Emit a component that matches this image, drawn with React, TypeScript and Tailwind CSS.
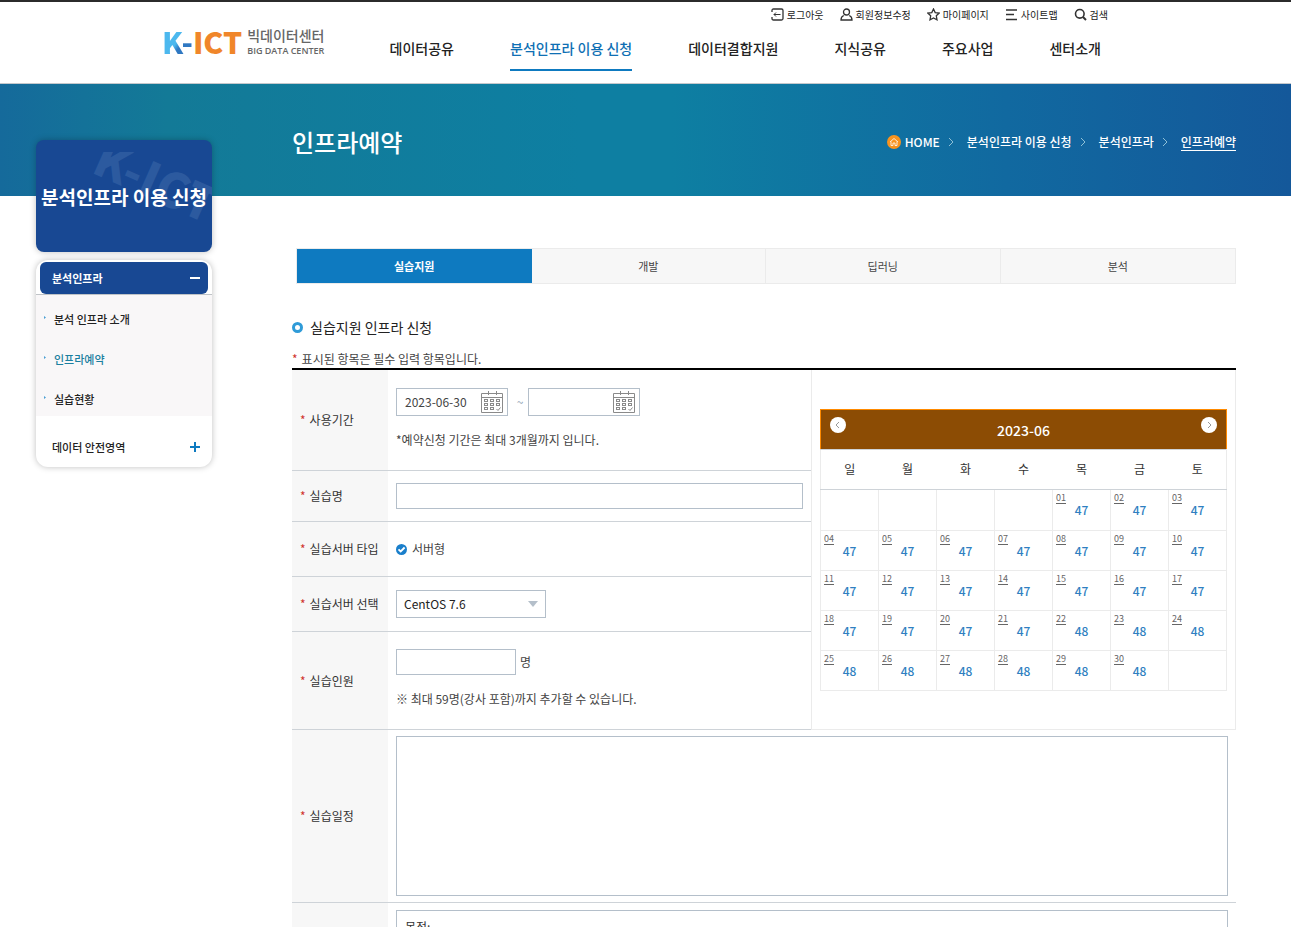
import { useState } from "react";

const UTIL_LINKS = [
  { label: "로그아웃", icon: "logout" },
  { label: "회원정보수정", icon: "user" },
  { label: "마이페이지", icon: "star" },
  { label: "사이트맵", icon: "menu" },
  { label: "검색", icon: "search" },
];

const NAV = ["데이터공유", "분석인프라 이용 신청", "데이터결합지원", "지식공유", "주요사업", "센터소개"];
const SIDE_ITEMS = ["분석 인프라 소개", "인프라예약", "실습현황"];
const TABS = ["실습지원", "개발", "딥러닝", "분석"];
const WEEKDAYS = ["일", "월", "화", "수", "목", "금", "토"];

// 2023-06 starts on Thursday
const FIRST_WEEKDAY = 4;
const DAYS_IN_MONTH = 30;

const WEEKS = Array.from({ length: 5 }, (_, w) =>
  Array.from({ length: 7 }, (_, d) => {
    const day = w * 7 + d - FIRST_WEEKDAY + 1;
    if (day < 1 || day > DAYS_IN_MONTH) return null;
    return { day: String(day).padStart(2, "0"), count: day < 22 ? 47 : 48 };
  })
);

function UtilIcon({ name }: { name: string }) {
  const paths: Record<string, React.ReactNode> = {
    logout: (
      <>
        <path d="M1 4V2.500Q1 1 2.500 1h8Q12 1 12 2.500v8q0 1.500-1.500 1.500h-8Q1 12 1 10.500V9" />
        <path d="M9.500 6.500H3M5 4.500l-2 2 2 2" strokeWidth="1" />
      </>
    ),
    user: (
      <>
        <circle cx="6.500" cy="4" r="3" />
        <path d="M3.800 7.500Q1 8.500 1 12h11q0-3.500-2.800-4.500" />
      </>
    ),
    star: <path d="M6.500 1l1.700 3.600 4 .5-2.900 2.700.7 4-3.500-1.900L3 11.800l.7-4L.8 5.100l4-.5z" />,
    menu: <path d="M1 2h11M1 6.500h8M1 11.500h11" strokeWidth="1.600" />,
    search: (
      <>
        <circle cx="5.800" cy="5.800" r="4.300" strokeWidth="1.600" />
        <path d="M9 9l3 3" strokeWidth="2" />
      </>
    ),
  };
  return (
    <svg viewBox="0 0 13 13" className="size-[13px] shrink-0" fill="none" stroke="#333" strokeWidth="1.300">
      {paths[name]}
    </svg>
  );
}

function CalendarIcon() {
  return (
    <svg viewBox="0 0 22 22" className="h-[22px] w-[22px]" fill="none" stroke="#8a8a8a">
      <path d="M.5 2.500h21v19H.5zM.5 6.500h21" />
      <path d="M7.500 0v4M15.500 0v4" />
      {[8.5, 12.5, 16.5].map((y) =>
        [3.5, 9.5, 15.5].map((x) =>
          x > 15 && y > 16 ? (
            <path key={`${x}-${y}`} d="M15.500 18l1.500 1.500 2.500-3" />
          ) : (
            <rect key={`${x}-${y}`} x={x} y={y} width="3" height="2" />
          )
        )
      )}
    </svg>
  );
}

function Logo() {
  return (
    <a href="#" aria-label="K-ICT 빅데이터센터" className="-ml-0.5 flex items-center gap-[5px]">
      <span className="text-[30px] leading-8 font-black whitespace-nowrap">
        <span className="bg-linear-to-br from-[#4cb8ee] from-50% to-[#2f78c2] to-60% bg-clip-text text-transparent">K-</span>
        <span className="text-[#f0862a]">ICT</span>
      </span>
      <span className="flex flex-col whitespace-nowrap text-[#666]">
        <span className="text-[14px] leading-5 font-medium">빅데이터센터</span>
        <span className="font-['Open_Sans',sans-serif] text-[9px] leading-3 font-semibold">BIG DATA CENTER</span>
      </span>
    </a>
  );
}

function Header() {
  return (
    <header className="h-21 border-t-2 border-b border-t-[#2b2b2b] border-b-[#c4c8cc] bg-white pr-[19px]">
      <div className="mx-auto flex max-w-[944px] items-start justify-between">
        <div className="mt-[23px]">
          <Logo />
        </div>
        <div className="flex flex-col items-end">
          <ul className="flex h-6 items-center gap-4">
            {UTIL_LINKS.map((u) => (
              <li key={u.label}>
                <a href="#" className="flex items-center gap-[3px] text-[10px] whitespace-nowrap text-[#222]">
                  <UtilIcon name={u.icon} />
                  {u.label}
                </a>
              </li>
            ))}
          </ul>
          <nav className="mt-2.5 mr-[7px]">
            <ul className="flex gap-14">
              {NAV.map((label, i) => (
                <li key={label}>
                  <a
                    href="#"
                    className={`block h-[35px] text-[14px] leading-6 font-medium whitespace-nowrap ${
                      i === 1 ? "border-b-2 border-[#0e7ac0] text-[#0e6fb4]" : "text-[#222]"
                    }`}
                  >
                    {label}
                  </a>
                </li>
              ))}
            </ul>
          </nav>
        </div>
      </div>
    </header>
  );
}

function Banner() {
  return (
    <section className="h-28 bg-linear-[90deg,#156a9b_0%,#137a97_13%,#0e7fa2_45%,#0e7fa2_52%,#1169a0_78%,#14589a_100%] pr-[19px] text-white">
      <div className="mx-auto flex h-full max-w-[1200px] items-center justify-between pt-1 pl-64">
        <h1 className="text-[24px] leading-9 font-medium">인프라예약</h1>
        <nav aria-label="breadcrumb">
          <ol className="flex items-center text-[12px] leading-4 font-medium whitespace-nowrap">
            <li className="flex items-center gap-1">
              <svg viewBox="0 0 14 14" className="size-3.5" fill="none" stroke="#fff" strokeWidth=".8">
                <circle cx="7" cy="7" r="7" fill="#f7931e" stroke="none" />
                <path d="M3 7l4-3.500L11 7M4 6.500V10.500h2V8h2v2.500h2v-4" />
              </svg>
              <a href="#">HOME</a>
            </li>
            <Separator />
            <li><a href="#">분석인프라 이용 신청</a></li>
            <Separator />
            <li><a href="#">분석인프라</a></li>
            <Separator />
            <li><a href="#" className="block border-b border-white">인프라예약</a></li>
          </ol>
        </nav>
      </div>
    </section>
  );
}

function Separator() {
  return (
    <li aria-hidden="true" className="mr-[13px] ml-2">
      <svg viewBox="0 0 6 10" className="h-2.5 w-1.5" fill="none" stroke="#8fc0d6">
        <path d="M1 1l4 4-4 4" />
      </svg>
    </li>
  );
}

function Sidebar() {
  const [open, setOpen] = useState(true);

  return (
    <aside className="w-44 shrink-0">
      <div className="relative flex h-28 items-center justify-center overflow-hidden rounded-lg bg-[#184893] pt-0.5 shadow-[0_0_6px_rgba(0,0,0,0.25)]">
        <svg viewBox="0 12 176 100" className="absolute inset-x-0 top-3 h-25 w-full" aria-hidden="true">
          <text x="54" y="32" fontSize="48" fontWeight="900" fill="#2c5a9f" transform="rotate(24 54 32)">
            K-ICT
          </text>
        </svg>
        <h2 className="relative text-[19px] leading-8 font-bold whitespace-nowrap text-white">분석인프라 이용 신청</h2>
      </div>

      <div className="mt-2 rounded-xl bg-white pt-0.5 text-[11px] font-medium text-[#222] shadow-[0_0_6px_rgba(0,0,0,0.25)]">
        <button
          type="button"
          aria-expanded={open}
          onClick={() => setOpen(!open)}
          className="mx-1 flex h-8 w-42 items-center justify-between rounded-md bg-[#184893] pr-2 pl-3 font-bold text-white"
        >
          분석인프라
          <span className="h-0.5 w-2.5 bg-white" />
        </button>
        {open && (
          <ul className="flex flex-col gap-5 border-t border-[#bfc3c7] bg-[#f9f7f8] pt-3.5 pb-[7px]">
            {SIDE_ITEMS.map((item, i) => (
              <li key={item} className="flex h-5 items-center gap-[7px] pl-2">
                <svg viewBox="0 0 3 8" className="h-2 w-[3px]" fill="#4a9fd4">
                  <path d="M0 1l2 1.500L0 4z" />
                </svg>
                <a href="#" className={i === 1 ? "text-[#1b7fa0]" : ""}>{item}</a>
              </li>
            ))}
          </ul>
        )}
        <button type="button" className="flex w-full items-center justify-between pt-[21px] pr-3 pb-2.5 pl-4 leading-5">
          데이터 안전영역
          <svg viewBox="0 0 10 10" className="size-2.5" stroke="#0e7ac0" strokeWidth="2">
            <path d="M5 0v10M0 5h10" />
          </svg>
        </button>
      </div>
    </aside>
  );
}

function Tabs() {
  const [active, setActive] = useState(0);

  return (
    <div role="tablist" className="ml-1 grid h-9 grid-cols-4 border border-[#ebebeb] bg-[#f7f7f7]">
      {TABS.map((tab, i) => (
        <button
          key={tab}
          type="button"
          role="tab"
          aria-selected={active === i}
          onClick={() => setActive(i)}
          className={`text-[11px] ${
            active === i ? "bg-[#0e7ac0] font-bold text-white" : "border-r border-[#ebebeb] text-[#444] last:border-r-0"
          }`}
        >
          {tab}
        </button>
      ))}
    </div>
  );
}

function FieldLabel({ htmlFor, children }: { htmlFor?: string; children: React.ReactNode }) {
  return (
    <th scope="row" className="border-b border-[#ced3d8] bg-[#f7f7f7] px-2 text-left align-middle font-normal whitespace-nowrap text-[#333]">
      <span className="mr-1 text-[#d0342c]">*</span>
      <label htmlFor={htmlFor}>{children}</label>
    </th>
  );
}

function DateField({ id, label, initial }: { id: string; label: string; initial: string }) {
  const [value, setValue] = useState(initial);

  return (
    <div className="flex h-7 w-28 items-center justify-between border border-[#b4bfca] pr-1 pl-2">
      <input
        id={id}
        type="text"
        aria-label={label}
        value={value}
        onChange={(e) => setValue(e.target.value)}
        className="w-[70px] text-[#444] outline-none"
      />
      <button type="button" aria-label={`${label} 선택`}>
        <CalendarIcon />
      </button>
    </div>
  );
}

function MonthButton({ label, d }: { label: string; d: string }) {
  return (
    <button type="button" aria-label={label} className="mt-[7px] flex size-4 items-center justify-center rounded-full bg-white">
      <svg viewBox="0 0 8 8" className="size-2" fill="none" stroke="#999">
        <path d={d} />
      </svg>
    </button>
  );
}

function Calendar() {
  return (
    <div>
      <div className="flex h-10 items-start justify-between border border-b-0 border-[#ff8a00] bg-[#8c4c04] px-[9px] text-white">
        <MonthButton label="이전 달" d="M5 1L2 4l3 3" />
        <h3 className="text-[14px] leading-10 font-medium">2023-06</h3>
        <MonthButton label="다음 달" d="M3 1l3 3-3 3" />
      </div>
      <table className="w-full table-fixed border-collapse">
        <thead>
          <tr className="h-10">
            {WEEKDAYS.map((w) => (
              <th key={w} scope="col" className="border-y border-[#ced3d8] font-normal text-[#333] first:border-l first:border-l-[#ebebeb] last:border-r last:border-r-[#ebebeb]">
                {w}
              </th>
            ))}
          </tr>
        </thead>
        <tbody>
          {WEEKS.map((week, w) => (
            <tr key={w} className="h-10 first:h-[41px]">
              {week.map((cell, d) => (
                <td key={d} className="border border-[#ebebeb] pt-0.5 align-top">
                  {cell && (
                    <a href="#" className="block">
                      <span className="block pl-[3px] text-[9px] leading-[11px] text-[#666] underline underline-offset-2">{cell.day}</span>
                      <span className="block text-center leading-[14px] font-medium text-[#2f7fc1]">{cell.count}</span>
                    </a>
                  )}
                </td>
              ))}
            </tr>
          ))}
        </tbody>
      </table>
    </div>
  );
}

function ReservationForm() {
  const [purpose, setPurpose] = useState("목적:");

  return (
    <form>
      <table className="w-full table-fixed border-separate border-spacing-0 border-t-2 border-black text-[12px] leading-6 text-[#444]">
        <colgroup>
          <col className="w-24" />
          <col />
          <col className="w-[425px]" />
        </colgroup>
        <tbody>
          <tr className="h-[101px]">
            <FieldLabel htmlFor="start">사용기간</FieldLabel>
            <td className="border-b border-[#ced3d8] px-2">
              <div className="flex items-center">
                <DateField id="start" label="시작일" initial="2023-06-30" />
                <span className="w-5 pl-1 text-center text-[#8fa3b5]">~</span>
                <DateField id="end" label="종료일" initial="" />
              </div>
              <p className="mt-3">*예약신청 기간은 최대 3개월까지 입니다.</p>
            </td>
            <td rowSpan={5} className="border border-t-0 border-[#ebebeb] px-2 align-middle">
              <Calendar />
            </td>
          </tr>
          <tr className="h-[51px]">
            <FieldLabel htmlFor="name">실습명</FieldLabel>
            <td className="border-b border-[#ced3d8] px-2">
              <input id="name" type="text" className="block h-[26px] w-full border border-[#b4bfca] px-2 outline-none" />
            </td>
          </tr>
          <tr className="h-[55px]">
            <FieldLabel>실습서버 타입</FieldLabel>
            <td className="border-b border-[#ced3d8] px-2">
              <label className="flex items-center gap-[5px]">
                <span className="relative size-[11px]">
                  <input type="radio" name="serverType" defaultChecked className="block size-[11px] appearance-none rounded-full bg-[#1a7fcb]" />
                  <svg viewBox="0 0 11 11" className="pointer-events-none absolute inset-0" fill="none" stroke="#fff" strokeWidth="1.800">
                    <path d="M2.500 5.300l2.200 2.200 3.900-4" />
                  </svg>
                </span>
                서버형
              </label>
            </td>
          </tr>
          <tr className="h-[55px]">
            <FieldLabel htmlFor="server">실습서버 선택</FieldLabel>
            <td className="border-b border-[#ced3d8] px-2">
              <div className="relative w-[150px]">
                <select id="server" className="block h-7 w-full appearance-none border border-[#b4bfca] bg-white px-[7px] text-[#222] outline-none">
                  <option>CentOS 7.6</option>
                </select>
                <svg viewBox="0 0 10 6" className="pointer-events-none absolute top-[11px] right-2 h-1.5 w-2.5" fill="#b4bfca">
                  <path d="M0 0h10L5 6z" />
                </svg>
              </div>
            </td>
          </tr>
          <tr className="h-[98px]">
            <FieldLabel htmlFor="people">실습인원</FieldLabel>
            <td className="border-b border-[#ced3d8] px-2 pb-0.5">
              <div className="flex items-center gap-1">
                <input id="people" type="text" className="h-[26px] w-30 border border-[#b4bfca] px-2 outline-none" />
                명
              </div>
              <p className="mt-3">※ 최대 59명(강사 포함)까지 추가할 수 있습니다.</p>
            </td>
          </tr>
          <tr className="h-[173px]">
            <FieldLabel htmlFor="schedule">실습일정</FieldLabel>
            <td colSpan={2} className="border-b border-[#ced3d8] px-2">
              <textarea id="schedule" className="block h-40 w-full resize-none border border-[#b4bfca] p-2 outline-none" />
            </td>
          </tr>
          <tr className="h-[175px]">
            <FieldLabel htmlFor="purpose">실습내용</FieldLabel>
            <td colSpan={2} className="border-b border-[#ced3d8] px-2">
              <textarea
                id="purpose"
                value={purpose}
                onChange={(e) => setPurpose(e.target.value)}
                className="block h-40 w-full resize-none border border-[#b4bfca] px-2 py-1 text-[#333] outline-none"
              />
            </td>
          </tr>
        </tbody>
      </table>
    </form>
  );
}

export default function App() {
  return (
    <div className="h-screen overflow-x-hidden overflow-y-auto bg-white font-['Noto_Sans_CJK_KR',sans-serif] text-[12px] [scrollbar-width:none]">
      <Header />
      <Banner />
      <div className="pr-[19px]">
        <div className="mx-auto flex max-w-[1200px] gap-20">
          <div className="relative -mt-14">
            <Sidebar />
          </div>
          <main className="min-w-0 flex-1 pt-13">
            <Tabs />
            <h2 className="mt-[31px] flex items-center gap-[7px] text-[14px] leading-6 text-[#222]">
              <span className="size-[11px] rounded-full border-[3px] border-[#2f9bd8]" />
              실습지원 인프라 신청
            </h2>
            <p className="mt-[11px] leading-[18px] text-[#444]">
              <span className="mr-1 text-[#d0342c]">*</span>
              표시된 항목은 필수 입력 항목입니다.
            </p>
            <ReservationForm />
          </main>
        </div>
      </div>
    </div>
  );
}
